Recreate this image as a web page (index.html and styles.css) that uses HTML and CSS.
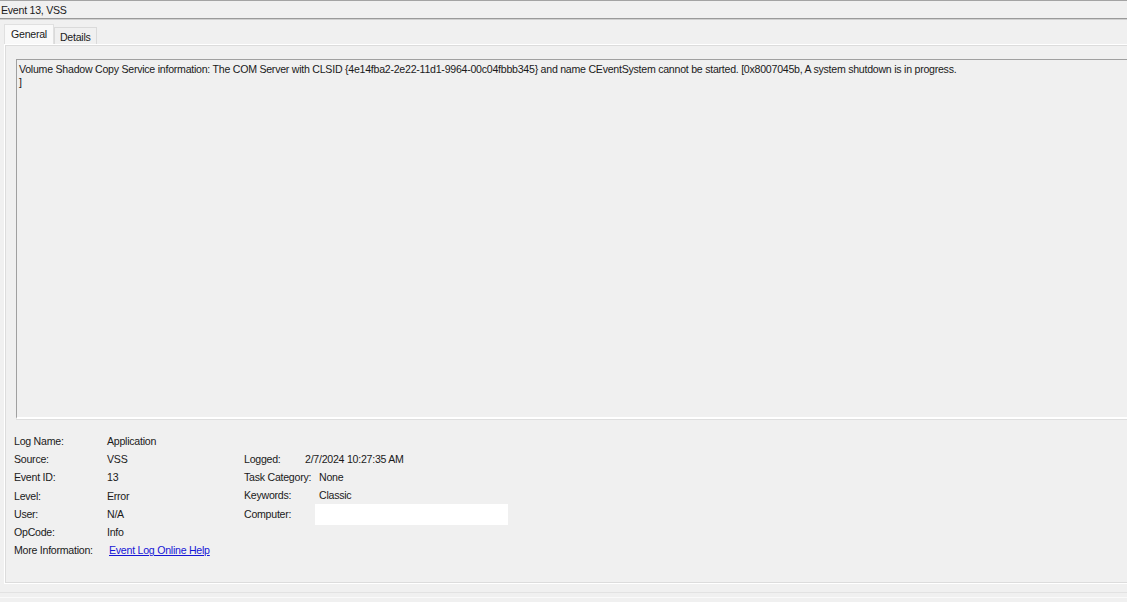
FILE: index.html
```html
<!DOCTYPE html>
<html>
<head>
<meta charset="utf-8">
<link rel="stylesheet" href="styles.css">
</head>
<body>
<div class="window">
  <div class="titlebar">Event 13, VSS</div>
  <div class="tabs">
    <div class="tab active">General</div>
    <div class="tab">Details</div>
  </div>
  <div class="panel">
    <div class="message">Volume Shadow Copy Service information: The COM Server with CLSID {4e14fba2-2e22-11d1-9964-00c04fbbb345} and name CEventSystem cannot be started. [0x8007045b, A system shutdown is in progress.<br>]</div>
    <div class="props">
      <div class="col1">
        <div class="row"><span class="lbl">Log Name:</span><span class="val">Application</span></div>
        <div class="row"><span class="lbl">Source:</span><span class="val">VSS</span></div>
        <div class="row"><span class="lbl">Event ID:</span><span class="val">13</span></div>
        <div class="row"><span class="lbl">Level:</span><span class="val">Error</span></div>
        <div class="row"><span class="lbl">User:</span><span class="val">N/A</span></div>
        <div class="row"><span class="lbl">OpCode:</span><span class="val">Info</span></div>
        <div class="row"><span class="lbl">More Information:</span><span class="val"><a class="link" href="#">Event Log Online Help</a></span></div>
      </div>
      <div class="col2">
        <div class="row"><span class="lbl2 narrow">Logged:</span><span class="val">2/7/2024 10:27:35 AM</span></div>
        <div class="row"><span class="lbl2">Task Category:</span><span class="val">None</span></div>
        <div class="row"><span class="lbl2">Keywords:</span><span class="val">Classic</span></div>
        <div class="row"><span class="lbl2 narrow">Computer:</span><span class="val"><span class="blank"></span></span></div>
      </div>
    </div>
  </div>
  <div class="footer"></div>
</div>
</body>
</html>
```
FILE: styles.css
```css
html, body {
  margin: 0;
  padding: 0;
  background: #f0f0f0;
  overflow: hidden;
}
.window {
  width: 1127px;
  height: 602px;
  font-family: "Liberation Sans", Arial, sans-serif;
  font-size: 10.6px;
  letter-spacing: -0.25px;
  color: #1a1a1a;
  border-top: 1px solid #a3a3a3;
  box-sizing: border-box;
  overflow: hidden;
}
.titlebar {
  height: 17px;
  line-height: 18px;
  padding-left: 1px;
  border-bottom: 1px solid #9a9a9a;
  box-shadow: 0 1px 0 #d0d0d0;
}
.tabs {
  display: flex;
  align-items: flex-end;
  padding-left: 4px;
  margin-top: 6px;
  height: 19px;
}
.tab {
  height: 16px;
  line-height: 18px;
  padding: 0 5px;
  border: 1px solid #dadada;
  border-bottom: none;
  background: #f0f0f0;
}
.tab.active {
  height: 19px;
  line-height: 19px;
  padding: 0 6px;
  background: #f9f9f9;
  border-color: #e0e0e0;
}
.panel {
  margin-left: 4px;
  width: 1140px;
  height: 540px;
  box-sizing: border-box;
  border: 1px solid #ffffff;
  box-shadow: inset 0 0 0 1px #dcdcdc;
  padding: 14px 0 0 11px;
}
.message {
  height: 360px;
  box-sizing: border-box;
  border-top: 1px solid #a0a0a0;
  border-left: 1px solid #a0a0a0;
  border-bottom: 2px solid #ffffff;
  padding: 3px 0 0 2px;
  line-height: 13px;
  white-space: nowrap;
  box-shadow: 0 1px 0 #dedede;
}
.props {
  display: flex;
  padding-top: 13px;
  margin-left: -2px;
}
.col1 { width: 230px; }
.col2 { padding-top: 18px; }
.row {
  display: flex;
  height: 18.2px;
  line-height: 18px;
  white-space: nowrap;
}
.lbl { width: 93px; }
.lbl2 { width: 75px; }
.lbl2.narrow { width: 61px; }
.link {
  color: #1515d6;
  text-decoration: underline;
  margin-left: 2px;
}
.blank {
  display: inline-block;
  width: 193px;
  height: 21px;
  background: #ffffff;
  margin: 0 0 0 10px;
  vertical-align: top;
  position: relative;
  top: -1px;
}
.footer {
  margin-top: 8px;
  height: 4px;
  border-top: 1px solid #e2e2e2;
  border-bottom: 1px solid #fafafa;
}
```
